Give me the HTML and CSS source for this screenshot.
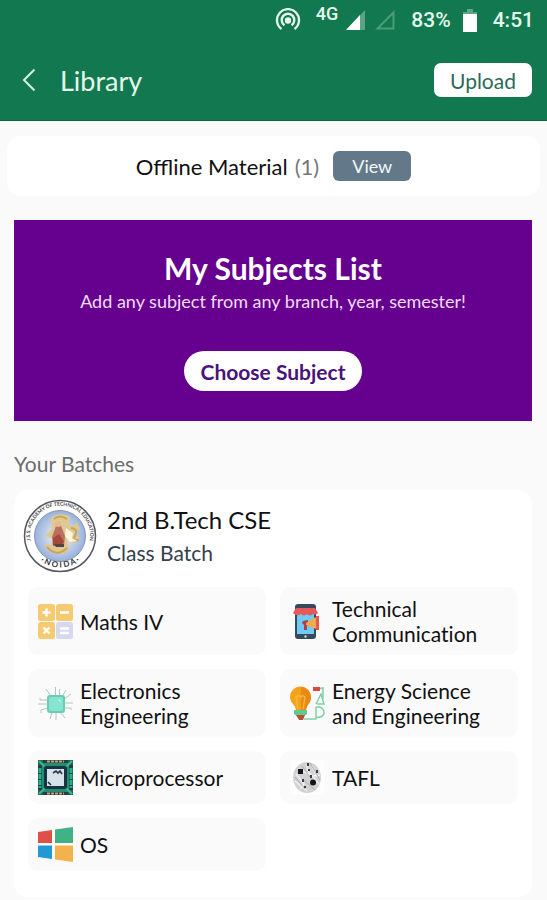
FILE: index.html
```html
<!DOCTYPE html>
<html lang="en">
<head>
    <meta charset="UTF-8">
    <meta name="viewport" content="width=device-width, initial-scale=1.0">
    <title>Library</title>
    <link rel="stylesheet" href="styles.css">
</head>
<body>
    <header class="top">
        <!-- Phone status -->
        <div class="status">
            <svg class="hotspot" width="26" height="24" viewBox="0 0 26 24" fill="none" stroke="#e4f5ec" stroke-width="2.4">
                <path d="M6.500 21A11 11 0 1 1 19.500 21"/>
                <path d="M9.500 17.300A6.300 6.300 0 1 1 16.500 17.300"/>
                <circle cx="13" cy="12.500" r="2" fill="#e4f5ec"/>
            </svg>
            <span class="network">4G</span>
            <svg class="signal" width="19" height="20" viewBox="0 0 19 20">
                <path d="M19 0V20H0Z" fill="#5ba585"/>
                <path d="M14 5V20H0Z" fill="#fff"/>
            </svg>
            <svg class="signal-off" width="20" height="20" viewBox="0 0 20 20" fill="none" stroke="#4b9c79" stroke-width="2">
                <path d="M18.500 2.500V18.500H2.500Z"/>
            </svg>
            <span class="battery-level">83%</span>
            <svg class="battery" width="14" height="23" viewBox="0 0 14 23">
                <path d="M4 0H10V3H14V7H0V3H4Z" fill="#5ba585"/>
                <path d="M0 5H14V23H0Z" fill="#fff"/>
            </svg>
            <span>4:51</span>
        </div>
        <div class="app-bar">
            <a class="back" href="#" aria-label="Back">
                <svg width="14" height="24" viewBox="0 0 14 24" fill="none" stroke="#d5f3e3" stroke-width="2">
                    <path d="M12.500 1.500L2 12L12.500 22.500"/>
                </svg>
            </a>
            <h1>Library</h1>
            <button class="upload">Upload</button>
        </div>
    </header>

    <main>
        <section class="offline">
            <span>Offline Material</span>
            <span class="count">(1)</span>
            <button class="view">View</button>
        </section>

        <section class="banner">
            <h2>My Subjects List</h2>
            <p>Add any subject from any branch, year, semester!</p>
            <button class="choose">Choose Subject</button>
        </section>

        <h3 class="section-title">Your Batches</h3>

        <section class="batch">
            <div class="batch-head">
                <svg class="seal" width="74" height="74" viewBox="0 0 74 74">
                    <defs>
                        <path id="arc-top" d="M8.500 46A30 30 0 1 1 65.500 46"/>
                        <path id="arc-bottom" d="M12 57A33 33 0 0 0 62 57"/>
                        <radialGradient id="sky">
                            <stop offset="0.300" stop-color="#dce3ee"/>
                            <stop offset="1" stop-color="#97b1dc"/>
                        </radialGradient>
                    </defs>
                    <circle cx="37" cy="37" r="35.500" fill="#fff" stroke="#55565e" stroke-width="1.500"/>
                    <circle cx="37" cy="37" r="25.500" fill="url(#sky)" stroke="#8995ad"/>
                    <path d="M28 19C33 14 43 14 48 19L45 25L50 27L54 23L57 30L53 34L57 40L50 45L44 40L46 50C42 57 32 57 24 50L21 45L28 46L30 40L22 37L29 30Z" fill="#dfc993"/>
                    <path d="M31 20Q37 15 44 20M24 48Q34 59 44 49M48 29Q56 30 52 37Q49 42 56 41" fill="none" stroke="#c9a45b" stroke-width="2"/>
                    <path d="M43 29L50 34L49 39L54 42L47 43L42 37Z" fill="#fbf5dc"/>
                    <path d="M33 27L38 27L42 37L41 47H30L29 38Z" fill="#b9705f"/>
                    <path d="M30 39L36 35L41 43L37 47L30 46Z" fill="#a6493d"/>
                    <path d="M31 45H41V48H33Z" fill="#594140"/>
                    <circle cx="35" cy="25" r="3" fill="#e7b891"/>
                    <text class="seal-text"><textPath href="#arc-top" startOffset="50%" text-anchor="middle">J.S.S. ACADEMY OF TECHNICAL EDUCATION</textPath></text>
                    <text class="seal-city"><textPath href="#arc-bottom" startOffset="50%" text-anchor="middle">· N O I D A ·</textPath></text>
                </svg>
                <div>
                    <h4>2nd B.Tech CSE</h4>
                    <p>Class Batch</p>
                </div>
            </div>

            <div class="subjects">
                <a class="subject" href="#">
                    <svg class="icon" viewBox="0 0 35 35">
                        <rect width="17" height="17" rx="2.500" fill="#f6ca70"/>
                        <rect x="18" width="17" height="17" rx="2.500" fill="#f6ca70"/>
                        <rect y="18" width="17" height="17" rx="2.500" fill="#f6ca70"/>
                        <rect x="18" y="18" width="17" height="17" rx="2.500" fill="#d5d8ef"/>
                        <path d="M8.500 4.500V12.500M4.500 8.500H12.500M22 8.500H31M5.500 23.500L11.500 29.500M11.500 23.500L5.500 29.500M22 24.500H31M22 29H31" stroke="#fff" stroke-width="2.400"/>
                    </svg>
                    <span>Maths IV</span>
                </a>
                <a class="subject" href="#">
                    <svg class="icon" viewBox="0 0 35 35">
                        <rect x="5" y="0" width="21" height="35" rx="3" fill="#34495e"/>
                        <rect x="7" y="4" width="17" height="26" fill="#6ecbf3"/>
                        <path d="M6 4H25L28 9Q25 12 23 10Q20 13 17 10Q14 13 11 10Q7 13 3 9Z" fill="#e7585b"/>
                        <path d="M13 17L18 16V21L17 22V26H14V21L12 19Z" fill="#ae3f4b"/>
                        <path d="M16 19L26 13V25L16 21Z" fill="#f5a94c"/>
                        <path d="M26 12H29V26H26Z" fill="#e35b4c"/>
                        <circle cx="15.500" cy="32.500" r="1.200" fill="#cbd8df"/>
                    </svg>
                    <span>Technical Communication</span>
                </a>
                <a class="subject" href="#">
                    <svg class="icon" viewBox="0 0 35 35">
                        <path d="M17.500 10V1M21.500 10V3M24 11L28 4M13 10L8 3M10 14H2V12M10 18H0M10 22L3 24V27M14 26L12 33M18 26V34M22 26L27 32M26 13L33 8M26 17H35M26 22H33V24" fill="none" stroke="#b4c4c6" stroke-width="1"/>
                        <rect x="9" y="9" width="18" height="18" rx="3" fill="#69cdb2"/>
                        <rect x="11" y="11" width="14" height="14" rx="2" fill="#86e5ce"/>
                        <path d="M20 14H22V16" fill="none" stroke="#c8fff2"/>
                    </svg>
                    <span>Electronics Engineering</span>
                </a>
                <a class="subject" href="#">
                    <svg class="icon" viewBox="0 0 35 35">
                        <path d="M0 11A10.500 10.500 0 0 1 21 11C21 17 17 18 16 24H6C5 18 0 17 0 11Z" fill="#f4a11c"/>
                        <path d="M11 1A10 10 0 0 1 21 11C21 17 17 18 16 24H11Z" fill="#e98a17"/>
                        <path d="M8 23L6 11Q10 8 10.500 12Q12 8 15 11L13 23" fill="none" stroke="#f7b936" stroke-width="1.500"/>
                        <path d="M4 24H17V28L14 30H7L4 28Z" fill="#62ca8c"/>
                        <path d="M6 29H15L13 34H9Z" fill="#b55237"/>
                        <path d="M14 33H26V21M27 3L33 2V13M26 18L31 8L34 18H27M26 21H29Q34 22 34 27Q33 32 26 31" fill="none" stroke="#82d1a5" stroke-width="1.500"/>
                        <path d="M23 1H30V5H23Z" fill="#d84a43"/>
                    </svg>
                    <span>Energy Science and Engineering</span>
                </a>
                <a class="subject" href="#">
                    <svg class="icon" viewBox="0 0 35 35">
                        <rect width="35" height="35" fill="#283c43"/>
                        <path d="M4 3H31V32H4Z" fill="#218e71"/>
                        <path d="M9 1.500H26M9 33.500H26" stroke="#c2a177" stroke-width="2" stroke-dasharray="3 1"/>
                        <path d="M2 8V28M33 8V28" stroke="#20b489" stroke-width="3" stroke-dasharray="5 1"/>
                        <path d="M0 0H5V5H0ZM30 0H35V5H30ZM0 30H5V35H0ZM30 30H35V35H30Z" fill="#1e6855"/>
                        <path d="M1 1L8 8M34 1L27 8M1 34L8 27M34 34L27 27" stroke="#35ba8e" stroke-width="2"/>
                        <rect x="6" y="6" width="23" height="23" rx="2" fill="#183346"/>
                        <rect x="9" y="9" width="17" height="17" fill="#d5e2e9"/>
                        <path d="M15 13L18 11L20 13L22 11L24 14M10 22L13 25" fill="none" stroke="#29323c" stroke-width="1.600"/>
                    </svg>
                    <span>Microprocessor</span>
                </a>
                <a class="subject" href="#">
                    <svg class="icon" viewBox="0 0 35 35">
                        <rect x="1" width="33" height="35" fill="#fdfdfd"/>
                        <ellipse cx="17" cy="17.500" rx="14" ry="15.500" fill="#d2d2d4"/>
                        <path d="M6 14L14 24L10 29M8 9L23 16L30 15M17 4L18 11L29 24M5 21L17 31M22 6L27 17" fill="none" stroke="#f0f0f0" stroke-width="1.500"/>
                        <path d="M5 17L15 29M12 6L25 24M14 20L25 30M20 3L30 20" fill="none" stroke="#a5a5a9" stroke-width="0.800"/>
                        <rect x="8" y="9" width="5" height="5" fill="#16161a"/>
                        <circle cx="23" cy="22.500" r="3" fill="#16161a"/>
                        <path d="M17 3H19V6H17ZM18 9H20V11H18ZM26 10H28V13H26ZM20 15H22V18H20ZM12 19H14V22H12ZM14 26H16V28H14Z" fill="#3d3d42"/>
                    </svg>
                    <span>TAFL</span>
                </a>
                <a class="subject" href="#">
                    <svg class="icon" viewBox="0 0 35 35">
                        <path d="M0 5L14 3V16H0Z" fill="#df5148"/>
                        <path d="M17 2.500L35 0V16H17Z" fill="#40b286"/>
                        <path d="M0 18.500H14V32L0 30Z" fill="#2298d5"/>
                        <path d="M17 18.500H35V35L17 32.500Z" fill="#f4b24f"/>
                    </svg>
                    <span>OS</span>
                </a>
            </div>
        </section>
    </main>
</body>
</html>
```

FILE: styles.css
```css
* {
    box-sizing: border-box;
}
body {
    font-family: Lato, sans-serif;
    margin: 0;
    background-color: #fafafa;
    color: #111;
}
h1, h2, h3, h4, p {
    margin: 0;
    font-weight: normal;
}
button {
    border: none;
    font-family: inherit;
    cursor: pointer;
}
a {
    color: inherit;
    text-decoration: none;
}
svg {
    display: block;
    flex-shrink: 0;
}

/* Header */
.top {
    background-color: #12784f;
    color: #e4f8ed;
    border-bottom: 1px solid #0b6440;
}
.status {
    display: flex;
    align-items: center;
    justify-content: flex-end;
    height: 40px;
    padding-right: 13px;
    font-family: Roboto, sans-serif;
    font-size: 21px;
    font-weight: 500;
}
.network {
    align-self: flex-start;
    margin: 4px 8px 0 15px;
    font-size: 18px;
    line-height: 20px;
}
.signal-off {
    margin: 0 16px 0 10px;
}
.battery {
    margin: 0 16px 0 12px;
}
.app-bar {
    display: flex;
    align-items: center;
    height: 80px;
    padding: 0 15px 0 22px;
}
.app-bar h1 {
    margin-left: 24px;
    font-size: 27px;
}
.upload {
    width: 98px;
    height: 34px;
    margin-left: auto;
    border-radius: 7px;
    background-color: #fff;
    color: #2c6b56;
    font-size: 21px;
}

/* Offline material */
.offline {
    display: flex;
    align-items: center;
    justify-content: center;
    height: 60px;
    margin: 15px 7px 24px;
    border-radius: 14px;
    background-color: #fff;
    font-size: 22px;
}
.count {
    margin: 0 14px 0 7px;
    color: #777;
}
.view {
    width: 78px;
    height: 30px;
    border-radius: 6px;
    background-color: #63798a;
    color: #f2f8fb;
    font-size: 18px;
}

/* Banner */
.banner {
    margin: 0 15px 0 14px;
    padding: 30px 14px;
    background-color: #66008f;
    color: #fff;
    text-align: center;
}
.banner h2 {
    font-size: 30px;
    font-weight: bold;
    line-height: 36px;
}
.banner p {
    margin-bottom: 35px;
    color: #f1ddf7;
    font-size: 18px;
    line-height: 30px;
}
.choose {
    width: 178px;
    height: 40px;
    border-radius: 20px;
    background-color: #fff;
    color: #491378;
    font-size: 21px;
    font-weight: bold;
}

/* Batches */
.section-title {
    margin: 30px 14px 13px;
    color: #6d6d6d;
    font-size: 21px;
    line-height: 26px;
}
.batch {
    margin: 0 15px 3px 14px;
    padding: 9px 14px 26px;
    border-radius: 14px;
    background-color: #fff;
}
.batch-head {
    display: flex;
    align-items: center;
    gap: 10px;
    margin: 0 -5px 14px;
}
.batch-head h4 {
    font-size: 24px;
    line-height: 34px;
}
.batch-head p {
    color: #35404c;
    font-size: 21px;
    line-height: 32px;
}
.seal-text {
    fill: #44454c;
    font-size: 5px;
    font-weight: bold;
}
.seal-city {
    fill: #33343b;
    font-size: 8px;
    font-weight: bold;
}
.subjects {
    display: grid;
    grid-template-columns: 1fr 1fr;
    gap: 14px;
}
.subject {
    display: flex;
    align-items: center;
    gap: 7px;
    padding: 9px 10px;
    border-radius: 10px;
    background-color: #fafafa;
    font-size: 21px;
    font-variant-ligatures: none;
    line-height: 25px;
}
.icon {
    width: 35px;
    height: 35px;
}
```
